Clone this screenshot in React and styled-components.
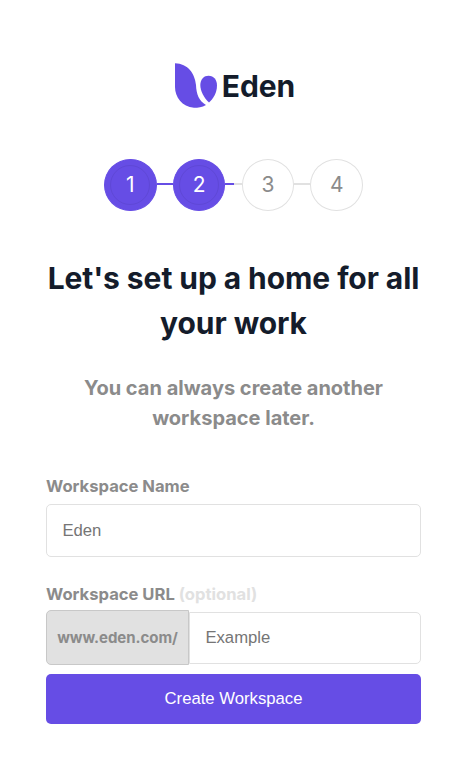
import React from "react";
import styled, { createGlobalStyle } from "styled-components";

const GlobalStyle = createGlobalStyle`
  *, *::before, *::after { box-sizing: border-box; }
  body { margin: 0; background: #fff; font-family: "Inter", sans-serif; }
`;

const Page = styled.main`
  width: 466px;
  height: 777px;
  padding: 63px 45px 0 46px;
  display: flex;
  flex-direction: column;
  background: #fff;
`;

const Brand = styled.header`
  display: flex;
  justify-content: center;
  height: 46px;
  gap: 4px;
  margin-left: 2px;
`;

const BrandName = styled.span`
  font-size: 30px;
  font-weight: 700;
  letter-spacing: -0.1px;
  line-height: 47px;
  color: #141c2b;
`;

const Steps = styled.ol`
  list-style: none;
  margin: 50px 0 0;
  padding: 0;
  display: flex;
  justify-content: center;
  align-items: center;
`;

const Step = styled.li`
  width: 52.5px;
  height: 52px;
  border-radius: 50%;
  display: grid;
  place-items: center;
  border: 1px solid ${(p) => (p.$active ? "#664de5" : "#e1e1e1")};
  background: ${(p) => (p.$active ? "#664de5" : "#fff")};
`;

const StepNumber = styled.span`
  width: 40px;
  height: 40px;
  border-radius: 50%;
  display: grid;
  place-items: center;
  border: 1px solid ${(p) => (p.$active ? "#5f48d6" : "transparent")};
  font-size: 21px;
  line-height: 38px;
  color: ${(p) => (p.$active ? "#fff" : "#8b8b8b")};
`;

const Connector = styled.li`
  width: 16.3px;
  height: 2px;
  margin-top: -2px;
  background: linear-gradient(
    to right,
    #664de5 ${(p) => p.$progress}%,
    #e1e1e1 ${(p) => p.$progress}%
  );
`;

const Title = styled.h1`
  margin: 45px -10px 0;
  font-size: 30px;
  font-weight: 700;
  letter-spacing: -0.08px;
  line-height: 45px;
  text-align: center;
  color: #141c2b;
`;

const Subtitle = styled.h2`
  margin: 27px 0 0;
  font-size: 20px;
  font-weight: 700;
  line-height: 30px;
  text-align: center;
  color: #8b8b8b;
`;

const Form = styled.form`
  display: flex;
  flex-direction: column;
`;

const Label = styled.label`
  height: 20px;
  margin-top: ${(p) => p.$top}px;
  font-size: 16.6px;
  font-weight: 700;
  line-height: 20px;
  color: #8b8b8b;
`;

const Optional = styled.span`
  color: #e1e1e1;
`;

const Input = styled.input`
  width: 100%;
  min-width: 0;
  height: ${(p) => (p.$joined ? 52 : 53)}px;
  padding: 0 15.4px;
  border: 1px solid #e1e1e1;
  border-radius: ${(p) => (p.$joined ? "0 5px 5px 0" : "5px")};
  background: #fff;
  outline: none;
  font-family: "Liberation Sans", Arial, sans-serif;
  font-size: 16.7px;
  &::placeholder { color: #757575; opacity: 1; }
`;

const NameInput = styled(Input)`
  margin-top: 8px;
`;

const UrlField = styled.div`
  display: flex;
  align-items: center;
  margin-top: 6px;
`;

const Prefix = styled.span`
  flex: none;
  width: 143px;
  height: 55px;
  border: 1px solid #c8c8c8;
  border-radius: 5px 0 0 5px;
  background: #e1e1e1;
  font-size: 15px;
  font-weight: 700;
  letter-spacing: -0.05px;
  line-height: 53px;
  text-align: center;
  color: #8b8b8b;
`;

const Submit = styled.button`
  height: 50px;
  margin-top: 9px;
  padding: 0;
  border: 0;
  border-radius: 5px;
  background: #664de5;
  color: #fff;
  font-family: "Liberation Sans", Arial, sans-serif;
  font-size: 16.7px;
`;

function Logo() {
  return (
    <svg width="44" height="46" viewBox="0 0 44 46" fill="#664de5" aria-hidden="true">
      <path d="M1 .3C14 .5 21 11 22 22C22.3 31 25 38 32 42C28 44.7 24 44.7 20 44.7C8 44 1 34 1 24Z" />
      <path d="M35 39.5C30 35 26.3 28 26.3 22C26.5 16 30 12.7 34.5 12.7C40 12.7 43 17 43 22.5C43 30 39 36 35 39.5Z" />
    </svg>
  );
}

const steps = [
  { number: 1, active: true, progress: 100 },
  { number: 2, active: true, progress: 50 },
  { number: 3, active: false, progress: 0 },
  { number: 4, active: false },
];

export default function App() {
  return (
    <>
      <GlobalStyle />
      <Page>
        <Brand>
          <Logo />
          <BrandName>Eden</BrandName>
        </Brand>
        <Steps>
          {steps.map((s) => (
            <React.Fragment key={s.number}>
              <Step $active={s.active}>
                <StepNumber $active={s.active}>{s.number}</StepNumber>
              </Step>
              {s.progress !== undefined && <Connector $progress={s.progress} />}
            </React.Fragment>
          ))}
        </Steps>
        <Title>Let's set up a home for all<br />your work</Title>
        <Subtitle>You can always create another<br />workspace later.</Subtitle>
        <Form>
          <Label $top={43} htmlFor="name">Workspace Name</Label>
          <NameInput id="name" placeholder="Eden" />
          <Label $top={27} htmlFor="url">
            Workspace URL <Optional>(optional)</Optional>
          </Label>
          <UrlField>
            <Prefix>www.eden.com/</Prefix>
            <Input id="url" $joined placeholder="Example" />
          </UrlField>
          <Submit type="button">Create Workspace</Submit>
        </Form>
      </Page>
    </>
  );
}
